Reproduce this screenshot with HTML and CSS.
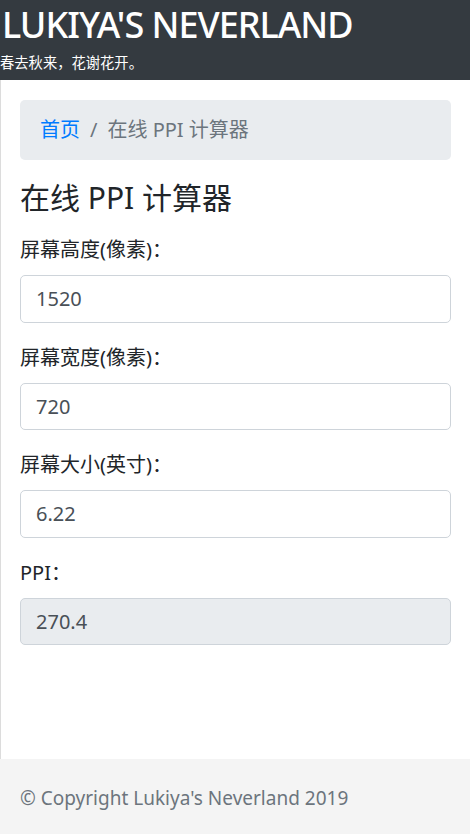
FILE: index.html
```html
<!DOCTYPE html>
<html lang="zh-CN">
<head>
<meta charset="utf-8">
<title>在线 PPI 计算器</title>
<link rel="stylesheet" href="styles.css">
</head>
<body>
<header class="site-header">
  <h1 class="site-title">LUKIYA'S NEVERLAND</h1>
  <p class="site-sub">春去秋来，花谢花开。</p>
</header>
<main class="main">
  <nav class="breadcrumb">
    <a class="crumb-link" href="#">首页</a>
    <span class="crumb-sep">/</span>
    <span class="crumb-active">在线 PPI 计算器</span>
  </nav>
  <h4 class="page-title">在线 PPI 计算器</h4>
  <form class="calc">
    <div class="group">
      <label class="label">屏幕高度(像素)：</label>
      <input class="input" type="text" value="1520">
    </div>
    <div class="group">
      <label class="label">屏幕宽度(像素)：</label>
      <input class="input" type="text" value="720">
    </div>
    <div class="group">
      <label class="label">屏幕大小(英寸)：</label>
      <input class="input" type="text" value="6.22">
    </div>
    <div class="group">
      <label class="label">PPI：</label>
      <input class="input readonly" type="text" value="270.4" readonly>
    </div>
  </form>
</main>
<footer class="footer">
  <p class="copy">© Copyright Lukiya's Neverland 2019</p>
</footer>
</body>
</html>
```
FILE: styles.css
```css
* { box-sizing: border-box; }
html, body { margin: 0; padding: 0; }
body {
  font-family: "Noto Sans", "Noto Sans CJK SC", sans-serif;
  font-size: 20px;
  line-height: 1.5;
  color: #212529;
  background: #fff;
}
.site-header {
  background: #343a40;
  color: #fff;
  height: 80px;
  padding: 0;
}
.site-title {
  margin: 0;
  padding: 2px 0 0 2px;
  font-size: 36px;
  font-weight: 500;
  line-height: 46px;
  letter-spacing: -1px;
  white-space: nowrap;
}
.site-sub {
  margin: 4px 0 0;
  font-size: 14.3px;
  line-height: 21px;
}
.main {
  border-left: 1px solid #dcdcdc;
  padding: 20px 19px 94px 19px;
}
.breadcrumb {
  background: #e9ecef;
  border-radius: 5px;
  padding: 15px 20px;
  line-height: 30px;
  margin-bottom: 20px;
  display: flex;
  align-items: center;
}
.crumb-link { color: #007bff; text-decoration: none; }
.crumb-sep { color: #6c757d; padding: 0 10px; }
.crumb-active { color: #6c757d; }
.page-title {
  margin: 0 0 19px;
  font-size: 30px;
  font-weight: 400;
  line-height: 36px;
}
.group { margin-bottom: 20px; }
.label {
  display: block;
  margin-bottom: 10px;
  line-height: 30px;
}
.input {
  display: block;
  width: 100%;
  height: 47.5px;
  padding: 7.5px 15px;
  font: inherit;
  font-size: 20px;
  line-height: 30px;
  color: #495057;
  background: #fff;
  border: 1px solid #ced4da;
  border-radius: 5px;
}
.input.readonly { background: #e9ecef; }
.footer {
  background: #f4f4f4;
  padding: 24px 20px;
}
.copy {
  margin: 0;
  font-size: 19px;
  color: #6c757d;
  line-height: 30px;
}
```
